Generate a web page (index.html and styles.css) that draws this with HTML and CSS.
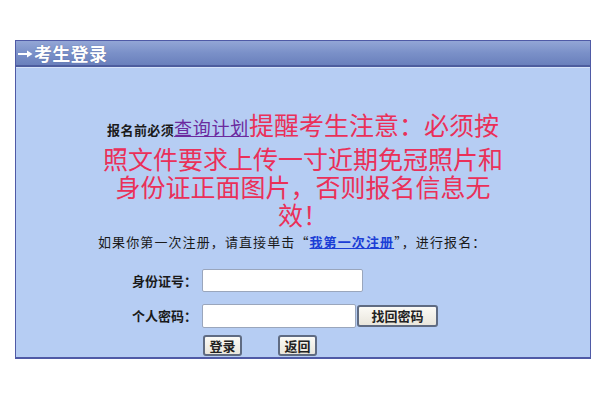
FILE: index.html
```html
<!DOCTYPE html>
<html lang="zh-CN">
<head>
<meta charset="utf-8">
<link rel="stylesheet" href="styles.css">
</head>
<body>
<div class="box">
  <div class="head">
    <svg class="arrow" width="16" height="8" viewBox="0 0 16 8"><path d="M1 4H11" stroke="#fff" stroke-width="2"/><path d="M10 0.5L15.5 4L10 7.5Z" fill="#fff"/></svg>
    <span class="title">考生登录</span>
  </div>
  <div class="content">
    <p class="notice"><span class="pre">报名前必须</span><a class="plan" href="#">查询计划</a><span class="warn">提醒考生注意：必须按照文件要求上传一寸近期免冠照片和身份证正面图片，否则报名信息无效！</span></p>
    <p class="reg">如果你第一次注册，请直接单击“<a class="first" href="#">我第一次注册</a>”，进行报名：</p>
    <div class="form">
      <label class="lbl">身份证号：</label>
      <div class="field"><input class="inp inp1" type="text"></div>
      <label class="lbl">个人密码：</label>
      <div class="field"><input class="inp inp2" type="password"><button class="btn btn-find">找回密码</button></div>
    </div>
    <div class="actions">
      <button class="btn btn-sm">登录</button>
      <button class="btn btn-sm">返回</button>
    </div>
  </div>
</div>
</body>
</html>
```

FILE: styles.css
```css
html, body {
  margin: 0;
  padding: 0;
  background: #ffffff;
}
body {
  font-family: "Noto Sans CJK SC", "DejaVu Sans", sans-serif;
  width: 600px;
  height: 400px;
  overflow: hidden;
}
.box {
  margin: 40px 0 0 15px;
  width: 574px;
  height: 316px;
  border: 1px solid #4f5aa6;
  border-bottom: 2px solid #4f5aa6;
  background: #b6cdf3;
  display: flex;
  flex-direction: column;
}
.head {
  height: 24px;
  border-bottom: 2px solid #4d5d9e;
  box-shadow: 0 1px 0 #d5e2f8;
  background: linear-gradient(#93a6d6, #7a90c8 50%, #6a80bc);
  display: flex;
  align-items: center;
  padding-left: 1px;
  color: #fff;
}
.arrow {
  margin-top: 1px;
  margin-right: 1px;
}
.title {
  font-size: 18px;
  font-weight: bold;
  letter-spacing: 0.3px;
  line-height: 24px;
  text-shadow: 0 0 1px #4a5a90;
}
.content {
  flex: 1;
  display: flex;
  flex-direction: column;
}
.notice {
  margin: 43px auto 0;
  width: 406px;
  text-align: center;
  line-height: 28px;
  font-size: 25px;
}
.pre {
  font-size: 13px;
  font-weight: bold;
  color: #1a1a1a;
  letter-spacing: 0.4px;
}
.plan {
  font-size: 18px;
  color: #6b2a9e;
  text-decoration: underline;
  letter-spacing: 0.7px;
}
.warn {
  color: #ea3059;
}
.reg {
  margin: 6px 0 0 82px;
  font-size: 13px;
  line-height: 16px;
  color: #1a1a1a;
  letter-spacing: 1.1px;
}
.first {
  color: #1b3ed6;
  font-weight: bold;
  text-decoration: underline;
}
.form {
  margin-top: 19px;
  display: grid;
  grid-template-columns: 181px 1fr;
  column-gap: 5px;
  row-gap: 12px;
  align-items: center;
}
.lbl {
  text-align: right;
  font-size: 13px;
  line-height: 16px;
  font-weight: bold;
  color: #1a1a1a;
}
.field {
  display: flex;
  align-items: center;
}
.inp {
  box-sizing: border-box;
  background: #fff;
  border: 1px solid #9aa6bc;
  border-radius: 2px;
  margin: 0;
  padding: 0;
}
.inp1 {
  width: 161px;
  height: 23px;
}
.inp2 {
  width: 154px;
  height: 24px;
}
.btn {
  box-sizing: border-box;
  font-family: "Noto Sans CJK SC", sans-serif;
  font-size: 13px;
  font-weight: bold;
  color: #222;
  background: linear-gradient(#fbfaf6, #e9e6dc);
  border: 2px solid #5f6b82;
  border-radius: 3px;
  padding: 0;
  line-height: 16px;
}
.btn-find {
  width: 81px;
  height: 22px;
  margin-left: 1px;
}
.actions {
  margin: 7px 0 0 187px;
  display: flex;
  gap: 36px;
}
.btn-sm {
  width: 39px;
  height: 21px;
}
```
